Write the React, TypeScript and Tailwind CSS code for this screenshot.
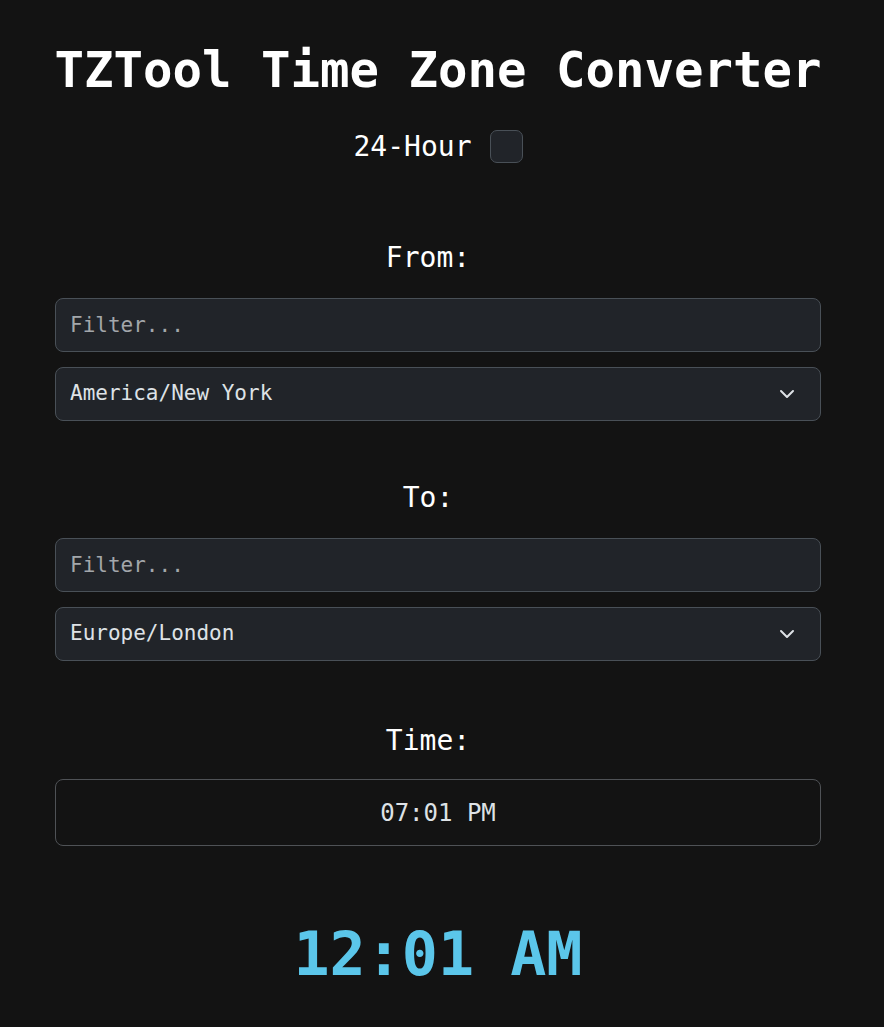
import { useState } from "react";

const zones = [
  "America/New York",
  "America/Chicago",
  "America/Los Angeles",
  "Europe/London",
  "Europe/Paris",
  "Asia/Tokyo",
];

const Chevron = () => (
  <svg
    className="pointer-events-none absolute right-[26px] top-1/2 -translate-y-1/2"
    width="16"
    height="16"
    viewBox="0 0 16 16"
    fill="none"
  >
    <path d="m2 5 6 6 6-6" stroke="#dee2e6" strokeWidth="2" strokeLinecap="round" strokeLinejoin="round" />
  </svg>
);

const ZonePicker = ({ label, value }: { label: string; value: string }) => {
  const [zone, setZone] = useState(value);
  return (
    <div className="flex flex-col">
      <div className="pr-[20px] text-center text-[28px] leading-none text-white">{label}</div>
      <input
        placeholder="Filter..."
        className="mt-[26px] h-[54px] rounded-lg border border-[#495057] bg-[#212429] px-[14px] text-[21px] text-[#dee2e6] placeholder:text-[#a3a7ab] outline-none"
      />
      <div className="relative mt-[15px]">
        <select
          value={zone}
          onChange={(e) => setZone(e.target.value)}
          className="h-[54px] w-full appearance-none rounded-lg border border-[#495057] bg-[#212429] px-[14px] text-[21px] text-[#dee2e6] outline-none"
        >
          {zones.map((z) => (
            <option key={z}>{z}</option>
          ))}
        </select>
        <Chevron />
      </div>
    </div>
  );
};

export default function App() {
  const [h24, setH24] = useState(false);

  return (
    <div className="min-h-[1027px] bg-[#131313] font-['DejaVu_Sans_Mono',monospace] text-white">
      <div className="ml-[55px] flex w-[766px] flex-col pt-[46px]">
        <h1 className="flex justify-center whitespace-nowrap text-[49px] leading-none font-bold">
          TZTool Time Zone Converter
        </h1>

        <label className="mt-[35px] flex items-center justify-center gap-[18px]">
          <span className="text-[28px] leading-none">24-Hour</span>
          <button
            onClick={() => setH24(!h24)}
            className="h-[33px] w-[33px] rounded-[7px] border border-[#495057] bg-[#212429]"
          />
        </label>

        <div className="mt-[81px]">
          <ZonePicker label="From:" value="America/New York" />
        </div>

        <div className="mt-[63px]">
          <ZonePicker label="To:" value="Europe/London" />
        </div>

        <div className="mt-[66px] flex flex-col">
          <div className="pr-[20px] text-center text-[28px] leading-none">Time:</div>
          <div className="mt-[24px] flex h-[67px] items-center justify-center rounded-lg border border-[#4f5256] text-2xl text-[#dee2e6]">
            {h24 ? "19:01" : "07:01 PM"}
          </div>
        </div>

        <div className="mt-[78px] text-center text-6xl leading-none font-bold text-[#5bc6ea]">
          {h24 ? "00:01" : "12:01 AM"}
        </div>
      </div>
    </div>
  );
}
